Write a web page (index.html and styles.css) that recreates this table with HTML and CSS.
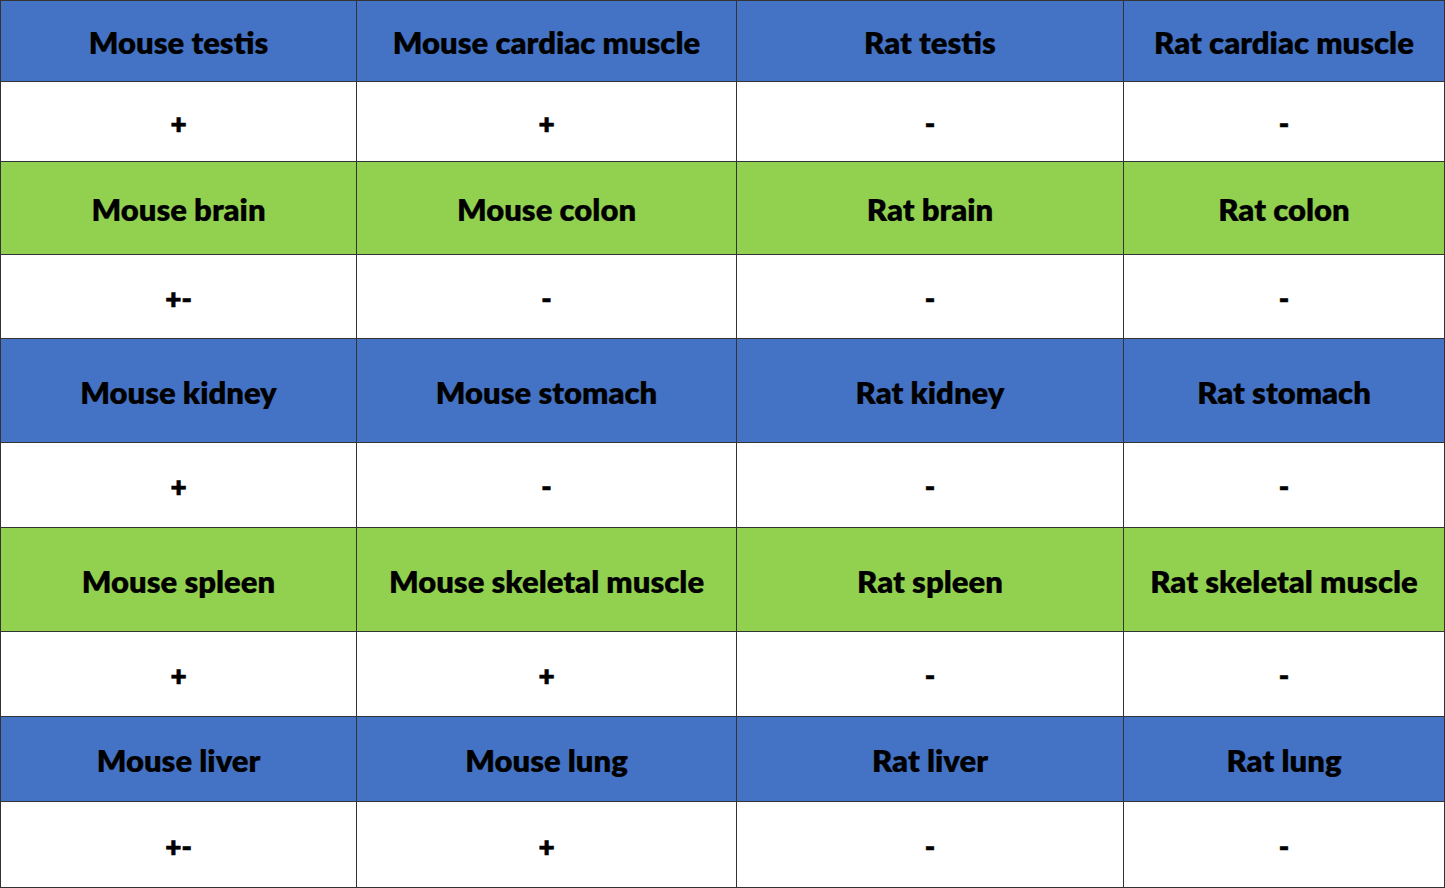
FILE: index.html
```html
<!DOCTYPE html>
<html>
<head>
<meta charset="utf-8">
<link rel="stylesheet" href="styles.css">
</head>
<body>
<table class="grid">
  <colgroup>
    <col class="c1"><col class="c2"><col class="c3"><col class="c4">
  </colgroup>
  <tr class="head blue r1"><td>Mouse testis</td><td>Mouse cardiac muscle</td><td>Rat testis</td><td>Rat cardiac muscle</td></tr>
  <tr class="val r2"><td>+</td><td>+</td><td>-</td><td>-</td></tr>
  <tr class="head green r3"><td>Mouse brain</td><td>Mouse colon</td><td>Rat brain</td><td>Rat colon</td></tr>
  <tr class="val r4"><td>+-</td><td>-</td><td>-</td><td>-</td></tr>
  <tr class="head blue r5"><td>Mouse kidney</td><td>Mouse stomach</td><td>Rat kidney</td><td>Rat stomach</td></tr>
  <tr class="val r6"><td>+</td><td>-</td><td>-</td><td>-</td></tr>
  <tr class="head green r7"><td>Mouse spleen</td><td>Mouse skeletal muscle</td><td>Rat spleen</td><td>Rat skeletal muscle</td></tr>
  <tr class="val r8"><td>+</td><td>+</td><td>-</td><td>-</td></tr>
  <tr class="head blue r9"><td>Mouse liver</td><td>Mouse lung</td><td>Rat liver</td><td>Rat lung</td></tr>
  <tr class="val r10"><td>+-</td><td>+</td><td>-</td><td>-</td></tr>
</table>
</body>
</html>
```
FILE: styles.css
```css
html, body {
  margin: 0;
  padding: 0;
  background: #ffffff;
}
.grid {
  border-collapse: collapse;
  table-layout: fixed;
  width: 1444px;
  font-family: "Lato", "Open Sans", "Liberation Sans", sans-serif;
  font-weight: 700;
  color: #000;
}
.c1 { width: 356px; }
.c2 { width: 380px; }
.c3 { width: 387px; }
.c4 { width: 321px; }
.grid td {
  border: 1px solid #333333;
  text-align: center;
  vertical-align: middle;
  padding: 2px 0 0 0;
  box-sizing: border-box;
}
.head td {
  font-size: 31px;
  font-weight: 800;
  -webkit-text-stroke: 0.2px #000;
}
.val td {
  font-size: 28px;
  font-weight: 800;
  -webkit-text-stroke: 0.6px #000;
}
.blue td { background: #4472c4; }
.green td { background: #92d050; }
.r1 { height: 81px; }
.r2 { height: 80px; }
.r3 { height: 93px; }
.r4 { height: 84px; }
.r5 { height: 104px; }
.r6 { height: 85px; }
.r7 { height: 104px; }
.r8 { height: 85px; }
.r9 { height: 85px; }
.r10 { height: 86px; }
```
